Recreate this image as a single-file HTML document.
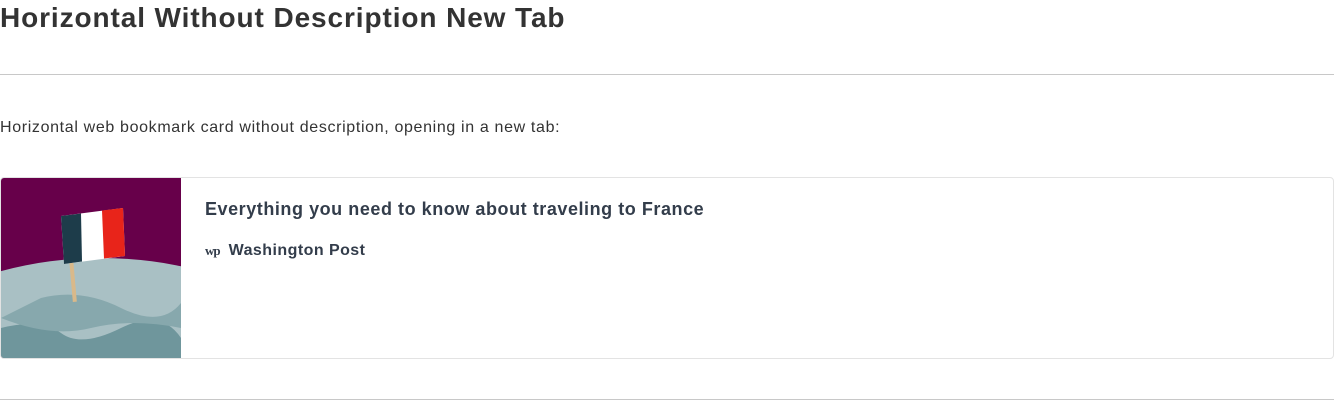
<!DOCTYPE html>
<html><head><style>
html,body{margin:0;width:1334px;height:400px;overflow:hidden;background:#fff;font-family:"Liberation Sans",sans-serif;color:#333}
h1{position:absolute;left:0;top:0;margin:0;font-size:28px;font-weight:bold;line-height:36px;letter-spacing:0.9px;color:#333}
.hr{position:absolute;left:0;width:1334px;height:1px;background:#c8c8c8}
p{position:absolute;left:0;top:117px;margin:0;font-size:16px;line-height:22px;letter-spacing:0.65px;color:#333}
.card{position:absolute;left:0;top:177px;width:1332px;height:180px;border:1px solid #e3e3e3;border-radius:4px;overflow:hidden}
.img{position:absolute;left:0;top:0;width:180px;height:180px;background:#67004a;overflow:hidden}
.t{position:absolute;left:204px;top:21px;font-size:18px;font-weight:bold;color:#333d4b;letter-spacing:0.55px}
.pub{position:absolute;left:204px;top:64px;font-size:16px;font-weight:bold;color:#333d4b;letter-spacing:0.45px}
.wp{font-family:"Liberation Serif",serif;font-size:13px;margin-right:9px;font-weight:bold;letter-spacing:-1px}
</style></head><body>
<h1>Horizontal Without Description New Tab</h1>
<div class="hr" style="top:74px"></div>
<p>Horizontal web bookmark card without description, opening in a new tab:</p>
<div class="card">
 <div class="img">
  <svg width="180" height="180" viewBox="0 0 180 180">
   <ellipse cx="100" cy="250" rx="260" ry="170" fill="#a9c0c4"/>
   <path d="M0 150 Q40 140 60 155 T120 150 T180 160 V180 H0Z" fill="#6f969c"/>
   <path d="M40 120 Q80 110 120 130 T180 125 V150 Q130 140 90 150 T0 140Z" fill="#87a8ad"/>
   <rect x="68" y="40" width="4" height="84" fill="#d9b98a" transform="rotate(-5 70 80)"/>
   <path d="M60 38 L122 30 L124 78 L63 86Z" fill="#fff"/>
   <path d="M60 38 L80 35.5 L81 83.5 L63 86Z" fill="#1d3c4a"/>
   <path d="M101 32.5 L122 30 L124 78 L103 80.5Z" fill="#e8241a"/>
  </svg>
 </div>
 <div class="t">Everything you need to know about traveling to France</div>
 <div class="pub"><span class="wp">wp</span>Washington Post</div>
</div>
<div class="hr" style="top:399px"></div>
</body></html>
